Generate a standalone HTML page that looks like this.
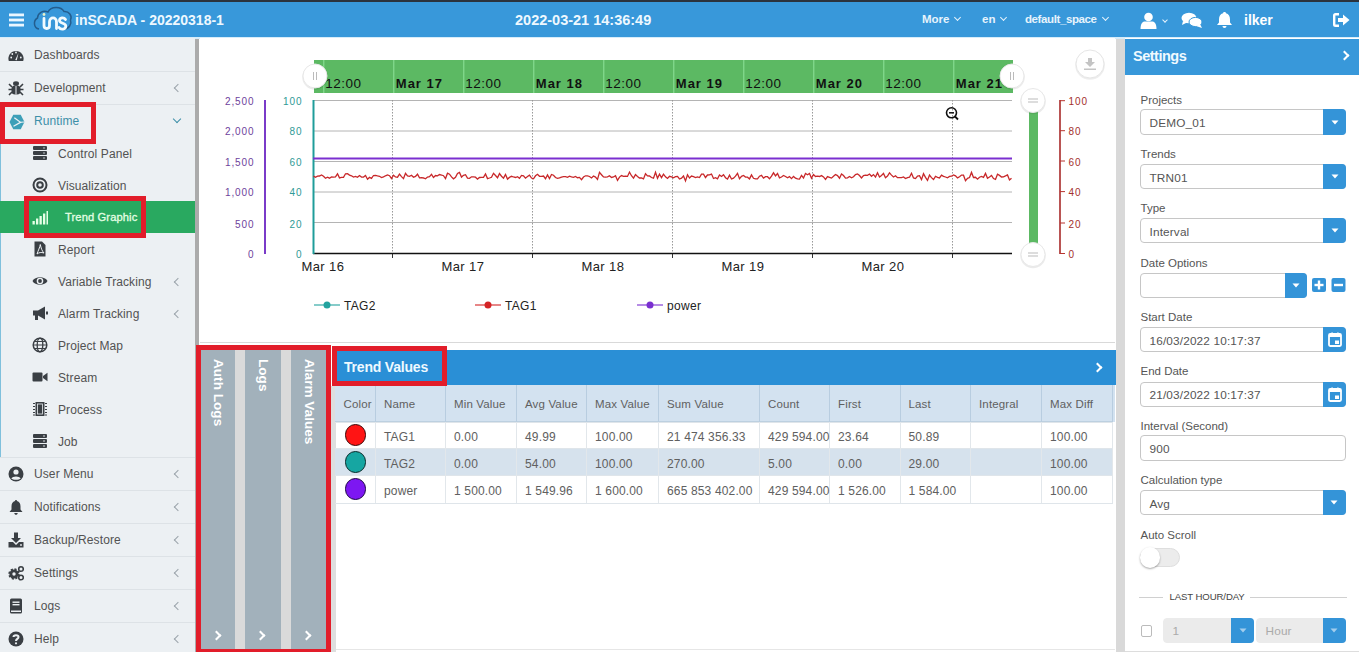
<!DOCTYPE html>
<html><head><meta charset="utf-8">
<style>
*{box-sizing:border-box;margin:0;padding:0}
html,body{width:1359px;height:652px;overflow:hidden;background:#fff;font-family:"Liberation Sans",sans-serif;position:relative}
.abs{position:absolute}
#topstrip{left:0;top:0;width:1359px;height:2px;background:#2b333d}
#header{left:0;top:2px;width:1359px;height:35px;background:#3898da;color:#fff}
#hline{left:0;top:37px;width:1359px;height:1.5px;background:#d6ecfa}
#sidebar{left:0;top:38px;width:195px;height:614px;background:#ecf0f3}
#sbbar{left:195px;top:39px;width:4px;height:613px;background:#ababab}
#main{left:200px;top:38px;width:915px;height:614px;background:#fff}
#vbar{left:1115.5px;top:39px;width:9.5px;height:613px;background:#d9d9d9}
#settings{left:1125px;top:38px;width:234px;height:614px;background:#fff}
.mi{position:absolute;left:0;width:195px;height:34px;border-bottom:1px solid #dde2e6;font-size:12px;color:#525252}
.mi span{position:absolute;left:34px;top:10px;letter-spacing:0.1px}
.si{position:absolute;left:0;width:195px;height:32px;font-size:12px;color:#525252}
.si span{position:absolute;left:58px;top:10px;letter-spacing:0.1px}
.chev{position:absolute;left:175px;top:14px;width:6px;height:6px;border-left:1.5px solid #9aa3aa;border-bottom:1.5px solid #9aa3aa;transform:rotate(45deg)}
.ico{position:absolute;left:8px;top:9px;width:16px;height:16px}
.sico{position:absolute;left:32px;top:8px;width:16px;height:16px}
.hchev{position:absolute;width:5px;height:5px;border-right:1.8px solid #e6f3fc;border-bottom:1.8px solid #e6f3fc;transform:rotate(45deg)}
.tab{top:350px;height:299px;background:#a2b1bb}
.vt{position:absolute;left:50%;top:9px;transform-origin:0 0;transform:rotate(90deg) translateY(-50%);white-space:nowrap;font-size:13.6px;font-weight:bold;color:#fff}
.tchev{position:absolute;left:12px;top:282px;width:7px;height:7px;border-right:2px solid #fff;border-top:2px solid #fff;transform:rotate(45deg)}
.tcell{font-size:12px;color:#606060;white-space:nowrap;letter-spacing:0.15px}
.slab{font-size:11.5px;color:#555;white-space:nowrap;letter-spacing:0px;margin-top:0.8px}
.sval{font-size:11.8px;color:#555;white-space:nowrap;letter-spacing:0.15px;margin-top:0.5px}
.redbox{position:absolute;border:5px solid #e21d2a}
</style></head><body>
<div id="topstrip" class="abs"></div>
<div id="header" class="abs">
 <svg class="abs" style="left:8px;top:11px" width="17" height="14" viewBox="0 0 17 14"><rect x="1" y="0.5" width="15" height="2.8" fill="#eaf6ff"/><rect x="1" y="5.6" width="15" height="2.8" fill="#eaf6ff"/><rect x="1" y="10.7" width="15" height="2.8" fill="#eaf6ff"/></svg>
 <svg class="abs" style="left:30px;top:0px" width="45" height="34" viewBox="0 0 45 34">
  <path d="M9 27 C3.5 26 3 18.5 7.5 16 C8 10.5 13.5 8 18 10 C21 4 31 4 34 9.5 C39 9 42.5 14 40.5 18 C42 22 39 27 34 27" fill="none" stroke="#235d8e" stroke-width="1.5"/>
  <g fill="none" stroke="#f2fbff" stroke-width="2.8" stroke-linecap="round">
   <path d="M14 16.5 L14 23.5 C14 27.5 19.5 27.5 19.5 23.5 L19.5 20 C19.5 14.5 26.5 14.5 26.5 20 L26.5 26.5"/>
   <path d="M35.5 17.5 C34 15 29.5 15.3 29.5 18.5 C29.5 21.8 35.8 20.8 35.8 24 C35.8 27.8 30.5 27.8 29 25.5"/>
  </g>
  <circle cx="14" cy="12.5" r="1.4" fill="#e8f0c8"/>
 </svg>
 <div class="abs" style="left:75px;top:10px;font-size:14px;font-weight:bold;color:#eef8ff;white-space:nowrap">inSCADA - 20220318-1</div>
 <div class="abs" style="left:515px;top:10px;font-size:14.5px;font-weight:bold;color:#eef8ff;white-space:nowrap">2022-03-21 14:36:49</div>
 <div class="abs" style="left:922px;top:11px;font-size:11.5px;font-weight:bold;color:#e6f3fc;white-space:nowrap">More</div>
 <div class="abs hchev" style="left:955px;top:13px"></div>
 <div class="abs" style="left:982px;top:11px;font-size:11.5px;font-weight:bold;color:#e6f3fc;white-space:nowrap">en</div>
 <div class="abs hchev" style="left:1001px;top:13px"></div>
 <div class="abs" style="left:1025px;top:11px;font-size:11.5px;font-weight:bold;color:#e6f3fc;white-space:nowrap;letter-spacing:-0.4px">default_space</div>
 <div class="abs hchev" style="left:1103px;top:13px"></div>
 <svg class="abs" style="left:1140px;top:10px" width="17" height="18" viewBox="0 0 17 18"><circle cx="8.5" cy="5" r="4.3" fill="#fff"/><path d="M0.5 17 C0.5 11 3 9.5 5 9.5 L12 9.5 C14 9.5 16.5 11 16.5 17 Z" fill="#fff"/></svg>
 <div class="abs hchev" style="left:1163px;top:16px;width:4px;height:4px"></div>
 <svg class="abs" style="left:1181px;top:10px" width="22" height="17" viewBox="0 0 22 17"><ellipse cx="8" cy="6" rx="7.5" ry="5.3" fill="#fff"/><path d="M2 9 L1 13 L6 10.5Z" fill="#fff"/><ellipse cx="14.5" cy="10" rx="6.5" ry="4.6" fill="#fff" stroke="#3898da" stroke-width="1"/><path d="M19 12 L21 16 L15 14Z" fill="#fff"/></svg>
 <svg class="abs" style="left:1216px;top:9px" width="17" height="18" viewBox="0 0 17 18"><path d="M8.5 1 C9.5 1 10 1.6 10 2.3 C12.8 3 14 5.5 14 8.5 L14 11.5 L16 14 L1 14 L3 11.5 L3 8.5 C3 5.5 4.2 3 7 2.3 C7 1.6 7.5 1 8.5 1Z" fill="#fff"/><path d="M6.5 15 L10.5 15 C10.5 16.3 9.6 17 8.5 17 C7.4 17 6.5 16.3 6.5 15Z" fill="#fff"/></svg>
 <div class="abs" style="left:1244px;top:10px;font-size:14px;font-weight:bold;color:#fff;white-space:nowrap">ilker</div>
 <svg class="abs" style="left:1333px;top:11px" width="17" height="14" viewBox="0 0 17 14"><path d="M6 1.2 L2.5 1.2 C1.6 1.2 1.2 1.7 1.2 2.5 L1.2 11.5 C1.2 12.3 1.6 12.8 2.5 12.8 L6 12.8" fill="none" stroke="#fff" stroke-width="2.4"/><path d="M5 5 L10 5 L10 1.5 L16.5 7 L10 12.5 L10 9 L5 9 Z" fill="#fff"/></svg>
</div>
<div id="hline" class="abs"></div>
<div id="sidebar" class="abs">
 <div class="mi" style="top:0px"><svg class="ico" style="top:9px" viewBox="0 0 16 16"><path d="M0.8 14 A7.6 7.6 0 1 1 15.2 14 Z" fill="#3a3f44"/><circle cx="3.2" cy="10.5" r="0.9" fill="#ecf0f3"/><circle cx="4.3" cy="7" r="0.9" fill="#ecf0f3"/><circle cx="12.8" cy="10.5" r="0.9" fill="#ecf0f3"/><circle cx="8" cy="5.5" r="0.9" fill="#ecf0f3"/><path d="M7.2 13 L10.5 6 L8.8 13.2Z" fill="#ecf0f3"/></svg><span>Dashboards</span></div>
 <div class="mi" style="top:33px"><svg class="ico" style="top:9px" viewBox="0 0 16 16"><ellipse cx="8" cy="3.5" rx="3" ry="2.3" fill="#3a3f44"/><rect x="3.5" y="5.5" width="9" height="9" rx="3.5" fill="#3a3f44"/><path d="M1 4 L4 7 M15 4 L12 7 M0.5 9.5 L4 9.5 M15.5 9.5 L12 9.5 M1 15 L4 12 M15 15 L12 12" stroke="#3a3f44" stroke-width="1.6"/><rect x="7.5" y="6" width="1" height="8.5" fill="#ecf0f3"/></svg><span>Development</span><div class="chev"></div></div>
 <div class="mi" style="top:66px;border-bottom:none"><svg class="ico" style="top:10px;left:9px" width="15" height="15" viewBox="0 0 15 15"><path d="M4 0.8 L11 0.8 L14.5 7.5 L11 14.2 L4 14.2 L0.5 7.5Z" fill="#3d9fb8"/><path d="M5 3.5 L10.8 7.8 L4.2 11.5" fill="none" stroke="#ecf0f3" stroke-width="1.2"/><path d="M10.8 7.8 L14.5 7.5" stroke="#ecf0f3" stroke-width="1"/></svg><span style="color:#3d8fa8">Runtime</span><div class="chev" style="left:174px;top:12px;border-color:#3d8fa8;transform:rotate(-45deg)"></div></div>
 <div class="abs" style="left:0;top:99px;width:1px;height:320px;background:#7fc0dc"></div>
 <div class="si" style="top:99px"><svg class="sico" viewBox="0 0 16 16"><rect x="1" y="1" width="14" height="4" rx="1" fill="#3a3f44"/><rect x="1" y="6" width="14" height="4" rx="1" fill="#3a3f44"/><rect x="1" y="11" width="14" height="4" rx="1" fill="#3a3f44"/><circle cx="12" cy="3" r="0.7" fill="#ecf0f3"/><circle cx="12" cy="8" r="0.7" fill="#ecf0f3"/><circle cx="12" cy="13" r="0.7" fill="#ecf0f3"/></svg><span>Control Panel</span></div>
 <div class="si" style="top:131px"><svg class="sico" viewBox="0 0 16 16"><circle cx="8" cy="8" r="6.5" fill="none" stroke="#3a3f44" stroke-width="2"/><circle cx="8" cy="8" r="2.8" fill="none" stroke="#3a3f44" stroke-width="2"/></svg><span>Visualization</span></div>
 <div class="si" style="top:163px;height:32px;background:#29a960;color:#e4ffe4"><svg class="sico" viewBox="0 0 16 16"><rect x="0.5" y="12" width="2.3" height="3.5" fill="#e6ffe6"/><rect x="4" y="9.5" width="2.3" height="6" fill="#e6ffe6"/><rect x="7.5" y="7" width="2.3" height="8.5" fill="#e6ffe6"/><rect x="11" y="4.5" width="2.3" height="11" fill="#e6ffe6"/><rect x="14.5" y="2" width="1.5" height="13.5" fill="#e6ffe6"/></svg><span style="left:65px;font-size:11.2px;color:#e4ffe4;-webkit-text-stroke:0.3px #e4ffe4">Trend Graphic</span></div>
 <div class="si" style="top:195px"><svg class="sico" viewBox="0 0 16 16"><path d="M2.5 0.5 L10 0.5 L13.5 4 L13.5 15.5 L2.5 15.5Z" fill="#3a3f44"/><path d="M5 13 C6 10 8 6 8.3 3.5 C9 7 10 10 12 12 C9 11 7 11.5 5 13Z" fill="none" stroke="#ecf0f3" stroke-width="1"/></svg><span>Report</span></div>
 <div class="si" style="top:227px"><svg class="sico" viewBox="0 0 16 16"><path d="M0.5 8 C3 3 13 3 15.5 8 C13 13 3 13 0.5 8Z" fill="#3a3f44"/><circle cx="8" cy="8" r="3.3" fill="#ecf0f3"/><circle cx="8" cy="8" r="1.9" fill="#3a3f44"/></svg><span>Variable Tracking</span><div class="chev"></div></div>
 <div class="si" style="top:259px"><svg class="sico" viewBox="0 0 16 16"><path d="M1 5.5 L6 5.5 L13 1.5 L13 14.5 L6 10.5 L1 10.5Z" fill="#3a3f44"/><rect x="3" y="10" width="3" height="5" fill="#3a3f44"/><rect x="14" y="6.5" width="2" height="3" fill="#3a3f44"/></svg><span>Alarm Tracking</span><div class="chev"></div></div>
 <div class="si" style="top:291px"><svg class="sico" viewBox="0 0 16 16"><circle cx="8" cy="8" r="6.8" fill="none" stroke="#3a3f44" stroke-width="1.5"/><ellipse cx="8" cy="8" rx="2.8" ry="6.8" fill="none" stroke="#3a3f44" stroke-width="1.3"/><path d="M1.2 8 L14.8 8 M2.5 4.5 L13.5 4.5 M2.5 11.5 L13.5 11.5" stroke="#3a3f44" stroke-width="1.2"/></svg><span>Project Map</span></div>
 <div class="si" style="top:323px"><svg class="sico" viewBox="0 0 16 16"><rect x="0.5" y="3.5" width="10" height="9" rx="1" fill="#3a3f44"/><path d="M11 7 L15.5 3.8 L15.5 12.2 L11 9Z" fill="#3a3f44"/></svg><span>Stream</span></div>
 <div class="si" style="top:355px"><svg class="sico" viewBox="0 0 16 16"><rect x="3.5" y="1" width="9" height="14" fill="#3a3f44"/><path d="M1 2.5 L3 2.5 M1 5.5 L3 5.5 M1 8.5 L3 8.5 M1 11.5 L3 11.5 M1 14 L3 14 M13 2.5 L15 2.5 M13 5.5 L15 5.5 M13 8.5 L15 8.5 M13 11.5 L15 11.5 M13 14 L15 14" stroke="#3a3f44" stroke-width="1.2"/><rect x="5.5" y="3" width="5" height="10" fill="none" stroke="#ecf0f3" stroke-width="0.8"/></svg><span>Process</span></div>
 <div class="si" style="top:387px"><svg class="sico" viewBox="0 0 16 16"><rect x="1" y="1" width="14" height="4" rx="1" fill="#3a3f44"/><rect x="1" y="6" width="14" height="4" rx="1" fill="#3a3f44"/><rect x="1" y="11" width="14" height="4" rx="1" fill="#3a3f44"/><circle cx="12" cy="3" r="0.8" fill="#ecf0f3"/><circle cx="12" cy="8" r="0.8" fill="#ecf0f3"/><circle cx="12" cy="13" r="0.8" fill="#ecf0f3"/></svg><span>Job</span></div>
 <div class="abs" style="left:0;top:419px;width:195px;height:1px;background:#dde2e6"></div>
 <div class="mi" style="top:419px"><svg class="ico" style="top:9px" viewBox="0 0 16 16"><circle cx="8" cy="8" r="7.5" fill="#3a3f44"/><circle cx="8" cy="6" r="2.6" fill="#ecf0f3"/><path d="M3.3 12.5 C4.5 9.8 11.5 9.8 12.7 12.5 C11 14.2 5 14.2 3.3 12.5Z" fill="#ecf0f3"/></svg><span>User Menu</span><div class="chev"></div></div>
 <div class="mi" style="top:452px"><svg class="ico" style="top:9px" viewBox="0 0 16 16"><path d="M8 1 C8.7 1 9 1.5 9 2 C11.5 2.6 12.5 4.8 12.5 7.5 L12.5 10.5 L14.5 13 L1.5 13 L3.5 10.5 L3.5 7.5 C3.5 4.8 4.5 2.6 7 2 C7 1.5 7.3 1 8 1Z" fill="#3a3f44"/><path d="M6.3 14 L9.7 14 C9.7 15.2 8.9 15.8 8 15.8 C7.1 15.8 6.3 15.2 6.3 14Z" fill="#3a3f44"/></svg><span>Notifications</span><div class="chev"></div></div>
 <div class="mi" style="top:485px"><svg class="ico" style="top:9px" viewBox="0 0 16 16"><path d="M6 0.5 L10 0.5 L10 6 L13 6 L8 11 L3 6 L6 6Z" fill="#3a3f44"/><path d="M0.5 10 L5 10 L8 13 L11 10 L15.5 10 L15.5 15.5 L0.5 15.5Z" fill="#3a3f44"/><circle cx="13" cy="13" r="0.9" fill="#ecf0f3"/></svg><span>Backup/Restore</span><div class="chev"></div></div>
 <div class="mi" style="top:518px"><svg class="ico" style="top:9px" viewBox="0 0 16 16"><circle cx="6" cy="9" r="4.6" fill="#3a3f44" stroke="#3a3f44" stroke-width="2.2" stroke-dasharray="2 1.6"/><circle cx="6" cy="9" r="1.7" fill="#ecf0f3"/><circle cx="13" cy="4" r="2.3" fill="none" stroke="#3a3f44" stroke-width="1.6"/><circle cx="13" cy="12.5" r="2.3" fill="none" stroke="#3a3f44" stroke-width="1.6"/></svg><span>Settings</span><div class="chev"></div></div>
 <div class="mi" style="top:551px"><svg class="ico" style="top:9px" viewBox="0 0 16 16"><rect x="2" y="0.5" width="12" height="15" rx="1.5" fill="#3a3f44"/><rect x="4.5" y="3.5" width="7" height="1.4" fill="#ecf0f3"/><rect x="4.5" y="6" width="7" height="1.4" fill="#ecf0f3"/><rect x="3" y="12.5" width="10" height="1.5" fill="#ecf0f3"/></svg><span>Logs</span><div class="chev"></div></div>
 <div class="mi" style="top:584px"><svg class="ico" style="top:9px" viewBox="0 0 16 16"><circle cx="8" cy="8" r="7.5" fill="#3a3f44"/><path d="M5.5 6 C5.5 3.5 10.5 3.5 10.5 6 C10.5 8 8 7.8 8 10" stroke="#ecf0f3" stroke-width="2" fill="none"/><circle cx="8" cy="12.3" r="1.1" fill="#ecf0f3"/></svg><span>Help</span><div class="chev"></div></div>
 <div class="redbox" style="left:0;top:64px;width:96px;height:42px"></div>
 <div class="redbox" style="left:24px;top:158px;width:122px;height:42px"></div>
</div>
<div id="sbbar" class="abs"></div>
<div id="main" class="abs"></div>
<svg class="abs" style="left:0;top:0" width="1359" height="652" viewBox="0 0 1359 652">
<rect x="314" y="60" width="699" height="33" fill="#5cb963"/>
<rect x="323.3" y="60" width="1" height="33" fill="#8fe39a"/>
<rect x="393.3" y="60" width="1" height="33" fill="#8fe39a"/>
<rect x="463.3" y="60" width="1" height="33" fill="#8fe39a"/>
<rect x="533.3" y="60" width="1" height="33" fill="#8fe39a"/>
<rect x="603.3" y="60" width="1" height="33" fill="#8fe39a"/>
<rect x="673.3" y="60" width="1" height="33" fill="#8fe39a"/>
<rect x="743.3" y="60" width="1" height="33" fill="#8fe39a"/>
<rect x="813.3" y="60" width="1" height="33" fill="#8fe39a"/>
<rect x="883.3" y="60" width="1" height="33" fill="#8fe39a"/>
<rect x="953.3" y="60" width="1" height="33" fill="#8fe39a"/>
<text x="325.3" y="88" font-family="Liberation Sans" font-size="13.5" fill="#111" letter-spacing="0.5">12:00</text>
<text x="395.8" y="88" font-family="Liberation Sans" font-size="13" font-weight="bold" fill="#111" letter-spacing="1">Mar 17</text>
<text x="465.3" y="88" font-family="Liberation Sans" font-size="13.5" fill="#111" letter-spacing="0.5">12:00</text>
<text x="535.8" y="88" font-family="Liberation Sans" font-size="13" font-weight="bold" fill="#111" letter-spacing="1">Mar 18</text>
<text x="605.3" y="88" font-family="Liberation Sans" font-size="13.5" fill="#111" letter-spacing="0.5">12:00</text>
<text x="675.8" y="88" font-family="Liberation Sans" font-size="13" font-weight="bold" fill="#111" letter-spacing="1">Mar 19</text>
<text x="745.3" y="88" font-family="Liberation Sans" font-size="13.5" fill="#111" letter-spacing="0.5">12:00</text>
<text x="815.8" y="88" font-family="Liberation Sans" font-size="13" font-weight="bold" fill="#111" letter-spacing="1">Mar 20</text>
<text x="885.3" y="88" font-family="Liberation Sans" font-size="13.5" fill="#111" letter-spacing="0.5">12:00</text>
<text x="955.8" y="88" font-family="Liberation Sans" font-size="13" font-weight="bold" fill="#111" letter-spacing="1">Mar 21</text>
<line x1="313" y1="100.5" x2="1012" y2="100.5" stroke="#b4b4b4" stroke-width="1"/>
<line x1="313" y1="131" x2="1012" y2="131" stroke="#b4b4b4" stroke-width="1"/>
<line x1="313" y1="161.5" x2="1012" y2="161.5" stroke="#b4b4b4" stroke-width="1"/>
<line x1="313" y1="192" x2="1012" y2="192" stroke="#b4b4b4" stroke-width="1"/>
<line x1="313" y1="222.5" x2="1012" y2="222.5" stroke="#b4b4b4" stroke-width="1"/>
<line x1="392.5" y1="100" x2="392.5" y2="253" stroke="#999" stroke-width="1" stroke-dasharray="1.5 1.5"/>
<line x1="392.5" y1="253" x2="392.5" y2="258" stroke="#333" stroke-width="1"/>
<line x1="532.5" y1="100" x2="532.5" y2="253" stroke="#999" stroke-width="1" stroke-dasharray="1.5 1.5"/>
<line x1="532.5" y1="253" x2="532.5" y2="258" stroke="#333" stroke-width="1"/>
<line x1="672.5" y1="100" x2="672.5" y2="253" stroke="#999" stroke-width="1" stroke-dasharray="1.5 1.5"/>
<line x1="672.5" y1="253" x2="672.5" y2="258" stroke="#333" stroke-width="1"/>
<line x1="812.5" y1="100" x2="812.5" y2="253" stroke="#999" stroke-width="1" stroke-dasharray="1.5 1.5"/>
<line x1="812.5" y1="253" x2="812.5" y2="258" stroke="#333" stroke-width="1"/>
<line x1="952.5" y1="100" x2="952.5" y2="253" stroke="#999" stroke-width="1" stroke-dasharray="1.5 1.5"/>
<line x1="952.5" y1="253" x2="952.5" y2="258" stroke="#333" stroke-width="1"/>
<line x1="313" y1="253.5" x2="1012" y2="253.5" stroke="#111" stroke-width="1.6"/>
<line x1="313.5" y1="100" x2="313.5" y2="254" stroke="#1f9d9a" stroke-width="2"/>
<line x1="265" y1="100" x2="265" y2="254" stroke="#7a3bc8" stroke-width="2"/>
<line x1="1060" y1="100" x2="1060" y2="254" stroke="#a82a28" stroke-width="1.6"/>
<text x="254.5" y="105.3" text-anchor="end" font-family="Liberation Sans" font-size="10" fill="#6e3f9c" letter-spacing="0.9">2,500</text>
<text x="254.5" y="135.3" text-anchor="end" font-family="Liberation Sans" font-size="10" fill="#6e3f9c" letter-spacing="0.9">2,000</text>
<text x="254.5" y="165.6" text-anchor="end" font-family="Liberation Sans" font-size="10" fill="#6e3f9c" letter-spacing="0.9">1,500</text>
<text x="254.5" y="196.2" text-anchor="end" font-family="Liberation Sans" font-size="10" fill="#6e3f9c" letter-spacing="0.9">1,000</text>
<text x="254.5" y="227.6" text-anchor="end" font-family="Liberation Sans" font-size="10" fill="#6e3f9c" letter-spacing="0.9">500</text>
<text x="254.5" y="258.1" text-anchor="end" font-family="Liberation Sans" font-size="10" fill="#6e3f9c" letter-spacing="0.9">0</text>
<text x="302.5" y="105.3" text-anchor="end" font-family="Liberation Sans" font-size="10" fill="#2f9a96" letter-spacing="0.9">100</text>
<text x="302.5" y="135.3" text-anchor="end" font-family="Liberation Sans" font-size="10" fill="#2f9a96" letter-spacing="0.9">80</text>
<text x="302.5" y="165.6" text-anchor="end" font-family="Liberation Sans" font-size="10" fill="#2f9a96" letter-spacing="0.9">60</text>
<text x="302.5" y="196.2" text-anchor="end" font-family="Liberation Sans" font-size="10" fill="#2f9a96" letter-spacing="0.9">40</text>
<text x="302.5" y="227.6" text-anchor="end" font-family="Liberation Sans" font-size="10" fill="#2f9a96" letter-spacing="0.9">20</text>
<text x="302.5" y="258.1" text-anchor="end" font-family="Liberation Sans" font-size="10" fill="#2f9a96" letter-spacing="0.9">0</text>
<line x1="1060" y1="100.7" x2="1065" y2="100.7" stroke="#b8352f" stroke-width="1"/>
<text x="1068.5" y="105.3" font-family="Liberation Sans" font-size="10" fill="#a3302c" letter-spacing="0.9">100</text>
<line x1="1060" y1="130.7" x2="1065" y2="130.7" stroke="#b8352f" stroke-width="1"/>
<text x="1068.5" y="135.3" font-family="Liberation Sans" font-size="10" fill="#a3302c" letter-spacing="0.9">80</text>
<line x1="1060" y1="161.0" x2="1065" y2="161.0" stroke="#b8352f" stroke-width="1"/>
<text x="1068.5" y="165.6" font-family="Liberation Sans" font-size="10" fill="#a3302c" letter-spacing="0.9">60</text>
<line x1="1060" y1="191.6" x2="1065" y2="191.6" stroke="#b8352f" stroke-width="1"/>
<text x="1068.5" y="196.2" font-family="Liberation Sans" font-size="10" fill="#a3302c" letter-spacing="0.9">40</text>
<line x1="1060" y1="223.0" x2="1065" y2="223.0" stroke="#b8352f" stroke-width="1"/>
<text x="1068.5" y="227.6" font-family="Liberation Sans" font-size="10" fill="#a3302c" letter-spacing="0.9">20</text>
<line x1="1060" y1="253.5" x2="1065" y2="253.5" stroke="#b8352f" stroke-width="1"/>
<text x="1068.5" y="258.1" font-family="Liberation Sans" font-size="10" fill="#a3302c" letter-spacing="0.9">0</text>
<line x1="313" y1="158.5" x2="1012" y2="158.5" stroke="#7b2fd0" stroke-width="2"/>
<polyline points="313.5,176.1 315.5,177.3 317.5,176.1 319.5,176.0 321.5,175.0 323.5,176.2 325.5,178.3 327.5,177.2 329.5,178.2 331.5,176.9 333.5,177.1 335.5,176.8 337.5,173.8 339.5,177.9 341.5,177.3 343.5,177.3 345.5,173.8 347.5,173.7 349.5,175.1 351.5,175.8 353.5,177.0 355.5,176.4 357.5,177.3 359.5,175.5 361.5,177.0 363.5,177.1 365.5,175.4 367.5,179.2 369.5,177.4 371.5,178.4 373.5,175.5 375.5,175.3 377.5,175.9 379.5,176.3 381.5,177.5 383.5,176.9 385.5,175.8 387.5,175.0 389.5,175.7 391.5,178.5 393.5,175.2 395.5,176.9 397.5,177.2 399.5,174.1 401.5,176.6 403.5,178.6 405.5,173.3 407.5,176.0 409.5,176.3 411.5,175.2 413.5,177.3 415.5,176.4 417.5,174.2 419.5,177.8 421.5,177.6 423.5,178.0 425.5,178.8 427.5,177.1 429.5,176.7 431.5,174.4 433.5,177.5 435.5,175.5 437.5,175.8 439.5,174.5 441.5,175.0 443.5,175.7 445.5,178.6 447.5,173.2 449.5,174.2 451.5,176.9 453.5,178.8 455.5,177.4 457.5,173.5 459.5,172.5 461.5,177.1 463.5,175.3 465.5,174.7 467.5,178.1 469.5,178.3 471.5,176.8 473.5,176.9 475.5,177.2 477.5,179.1 479.5,177.5 481.5,177.3 483.5,177.4 485.5,174.0 487.5,178.6 489.5,178.0 491.5,177.3 493.5,173.3 495.5,175.5 497.5,177.8 499.5,173.6 501.5,176.2 503.5,178.1 505.5,174.4 507.5,179.1 509.5,177.4 511.5,176.3 513.5,177.0 515.5,177.5 517.5,176.7 519.5,178.3 521.5,175.4 523.5,175.8 525.5,178.2 527.5,176.5 529.5,175.1 531.5,178.0 533.5,178.8 535.5,175.8 537.5,174.3 539.5,176.3 541.5,176.3 543.5,176.0 545.5,178.7 547.5,174.9 549.5,178.5 551.5,174.5 553.5,175.2 555.5,177.5 557.5,178.3 559.5,177.9 561.5,177.1 563.5,176.7 565.5,176.7 567.5,177.4 569.5,176.2 571.5,176.9 573.5,177.4 575.5,176.5 577.5,177.7 579.5,177.4 581.5,179.7 583.5,177.0 585.5,175.8 587.5,175.9 589.5,176.5 591.5,178.0 593.5,176.0 595.5,177.1 597.5,179.4 599.5,172.4 601.5,174.7 603.5,176.9 605.5,177.1 607.5,176.9 609.5,175.8 611.5,177.5 613.5,177.0 615.5,175.7 617.5,180.4 619.5,177.1 621.5,175.6 623.5,176.3 625.5,176.1 627.5,176.4 629.5,172.1 631.5,175.7 633.5,178.1 635.5,174.6 637.5,176.4 639.5,178.0 641.5,177.9 643.5,178.9 645.5,173.8 647.5,175.9 649.5,176.0 651.5,177.5 653.5,178.2 655.5,172.2 657.5,178.2 659.5,174.2 661.5,177.6 663.5,174.1 665.5,176.8 667.5,178.4 669.5,176.3 671.5,176.8 673.5,177.8 675.5,176.7 677.5,176.4 679.5,179.0 681.5,178.2 683.5,176.0 685.5,180.9 687.5,174.7 689.5,178.0 691.5,176.1 693.5,176.7 695.5,177.6 697.5,176.9 699.5,177.5 701.5,174.1 703.5,174.1 705.5,177.5 707.5,175.0 709.5,174.9 711.5,174.1 713.5,178.5 715.5,177.7 717.5,178.9 719.5,175.0 721.5,176.5 723.5,174.7 725.5,177.7 727.5,179.0 729.5,175.1 731.5,179.0 733.5,178.1 735.5,176.2 737.5,173.3 739.5,178.8 741.5,176.3 743.5,175.5 745.5,177.1 747.5,177.2 749.5,178.9 751.5,174.9 753.5,178.3 755.5,178.9 757.5,178.8 759.5,176.2 761.5,175.3 763.5,178.1 765.5,176.7 767.5,176.7 769.5,178.8 771.5,176.1 773.5,172.8 775.5,175.9 777.5,173.5 779.5,177.8 781.5,177.0 783.5,175.5 785.5,176.5 787.5,177.8 789.5,176.6 791.5,178.6 793.5,176.4 795.5,178.2 797.5,178.9 799.5,179.1 801.5,175.4 803.5,177.9 805.5,173.5 807.5,174.8 809.5,173.4 811.5,178.2 813.5,174.5 815.5,176.5 817.5,176.2 819.5,176.5 821.5,175.6 823.5,176.9 825.5,179.4 827.5,176.6 829.5,177.3 831.5,178.1 833.5,176.2 835.5,174.5 837.5,175.6 839.5,178.2 841.5,173.9 843.5,175.5 845.5,178.1 847.5,177.8 849.5,176.5 851.5,177.8 853.5,176.8 855.5,174.6 857.5,174.0 859.5,175.5 861.5,178.0 863.5,175.6 865.5,175.1 867.5,175.3 869.5,174.0 871.5,176.3 873.5,174.6 875.5,177.1 877.5,172.7 879.5,177.0 881.5,175.5 883.5,173.4 885.5,177.7 887.5,176.1 889.5,172.9 891.5,175.1 893.5,177.0 895.5,175.8 897.5,177.7 899.5,177.7 901.5,177.6 903.5,177.0 905.5,178.6 907.5,177.6 909.5,177.2 911.5,173.2 913.5,177.9 915.5,178.6 917.5,176.0 919.5,175.7 921.5,179.6 923.5,173.7 925.5,177.3 927.5,180.4 929.5,175.0 931.5,177.6 933.5,179.5 935.5,176.3 937.5,177.4 939.5,177.9 941.5,175.1 943.5,176.4 945.5,177.0 947.5,177.8 949.5,176.4 951.5,176.2 953.5,174.9 955.5,175.9 957.5,177.9 959.5,176.7 961.5,175.1 963.5,175.2 965.5,180.8 967.5,178.3 969.5,177.5 971.5,172.4 973.5,177.5 975.5,177.3 977.5,179.2 979.5,177.2 981.5,176.4 983.5,177.3 985.5,173.4 987.5,178.2 989.5,177.0 991.5,175.4 993.5,178.6 995.5,179.4 997.5,174.3 999.5,175.4 1001.5,177.0 1003.5,176.8 1005.5,175.9 1007.5,174.9 1009.5,179.9 1011.5,178.2" fill="none" stroke="#c8282a" stroke-width="1.3"/>
<text x="301.5" y="270.7" font-family="Liberation Sans" font-size="13" fill="#222" letter-spacing="0.4">Mar 16</text>
<text x="441.5" y="270.7" font-family="Liberation Sans" font-size="13" fill="#222" letter-spacing="0.4">Mar 17</text>
<text x="581.5" y="270.7" font-family="Liberation Sans" font-size="13" fill="#222" letter-spacing="0.4">Mar 18</text>
<text x="721.5" y="270.7" font-family="Liberation Sans" font-size="13" fill="#222" letter-spacing="0.4">Mar 19</text>
<text x="861.5" y="270.7" font-family="Liberation Sans" font-size="13" fill="#222" letter-spacing="0.4">Mar 20</text>
<line x1="314" y1="305" x2="340" y2="305" stroke="#23a39f" stroke-width="1.1"/><circle cx="327" cy="305" r="3.5" fill="#23a39f"/>
<text x="344" y="309.5" font-family="Liberation Sans" font-size="12" fill="#222" letter-spacing="0.3">TAG2</text>
<line x1="475" y1="305" x2="501" y2="305" stroke="#d42426" stroke-width="1.1"/><circle cx="488" cy="305" r="3.5" fill="#d42426"/>
<text x="505" y="309.5" font-family="Liberation Sans" font-size="12" fill="#222" letter-spacing="0.3">TAG1</text>
<line x1="637" y1="305" x2="663" y2="305" stroke="#7a2fd0" stroke-width="1.1"/><circle cx="650" cy="305" r="3.5" fill="#7a2fd0"/>
<text x="667" y="309.5" font-family="Liberation Sans" font-size="12" fill="#222" letter-spacing="0.3">power</text>
<rect x="1029" y="100" width="9" height="155" fill="#5cb963"/>
<circle cx="315" cy="77" r="12.8" fill="#000" opacity="0.08"/><circle cx="315" cy="76" r="12" fill="#fff" stroke="#e8e8e8" stroke-width="1"/><line x1="313.5" y1="72" x2="313.5" y2="80" stroke="#bbb" stroke-width="1"/><line x1="316.5" y1="72" x2="316.5" y2="80" stroke="#bbb" stroke-width="1"/>
<circle cx="1012" cy="77" r="12.8" fill="#000" opacity="0.08"/><circle cx="1012" cy="76" r="12" fill="#fff" stroke="#e8e8e8" stroke-width="1"/><line x1="1010.5" y1="72" x2="1010.5" y2="80" stroke="#bbb" stroke-width="1"/><line x1="1013.5" y1="72" x2="1013.5" y2="80" stroke="#bbb" stroke-width="1"/>
<circle cx="1033" cy="101.5" r="12.8" fill="#000" opacity="0.08"/><circle cx="1033" cy="100.5" r="12" fill="#fff" stroke="#e8e8e8" stroke-width="1"/><line x1="1028" y1="99.0" x2="1038" y2="99.0" stroke="#bbb" stroke-width="1"/><line x1="1028" y1="102.0" x2="1038" y2="102.0" stroke="#bbb" stroke-width="1"/>
<circle cx="1033" cy="255.5" r="12.8" fill="#000" opacity="0.08"/><circle cx="1033" cy="254.5" r="12" fill="#fff" stroke="#e8e8e8" stroke-width="1"/><line x1="1028" y1="253.0" x2="1038" y2="253.0" stroke="#bbb" stroke-width="1"/><line x1="1028" y1="256.0" x2="1038" y2="256.0" stroke="#bbb" stroke-width="1"/>
<circle cx="1090" cy="65" r="14.8" fill="#000" opacity="0.07"/><circle cx="1090" cy="64" r="14" fill="#fff" stroke="#e6e6e6" stroke-width="1"/>
<path d="M1088 58 L1092 58 L1092 62 L1095 62 L1090 67 L1085 62 L1088 62Z" fill="#c4c4c4"/><rect x="1084" y="68.5" width="12" height="1.5" fill="#c4c4c4"/>
<circle cx="951.5" cy="112.8" r="5" fill="none" stroke="#111" stroke-width="1.6"/><line x1="949" y1="112.8" x2="954" y2="112.8" stroke="#111" stroke-width="1.5"/><line x1="955" y1="116.5" x2="958" y2="119.5" stroke="#111" stroke-width="1.8"/>
<rect x="200" y="342" width="915" height="1" fill="#d9d9d9"/>
</svg>

<div class="abs" style="left:196px;top:345px;width:135px;height:309px;background:#e21d2a"></div>
<div class="abs" style="left:201px;top:350px;width:125px;height:299px;background:#dadada"></div>
<div class="abs" style="left:331px;top:386px;width:5px;height:266px;background:#dedede"></div>
<div class="abs" style="left:336px;top:649px;width:779px;height:1px;background:#e6e6e6"></div>
<div class="abs tab" style="left:201px;width:34px"><div class="vt">Auth Logs</div><div class="tchev"></div></div>
<div class="abs tab" style="left:245px;width:36px"><div class="vt">Logs</div><div class="tchev"></div></div>
<div class="abs tab" style="left:291px;width:35px"><div class="vt">Alarm Values</div><div class="tchev"></div></div>
<div class="abs" style="left:332px;top:350px;width:784px;height:35px;background:#2a8fd6"></div>
<div class="abs" style="left:1094px;top:364px;width:7px;height:7px;border-right:2px solid #fff;border-top:2px solid #fff;transform:rotate(45deg)"></div>
<div class="abs" style="left:335px;top:385px;width:780px;height:37px;background:#d3e2f0"></div>
<div class="abs" style="left:335px;top:448px;width:778px;height:27px;background:#d6e2ed"></div>
<div class="abs" style="left:335px;top:421.5px;width:778px;height:1px;background:#dfe5ea"></div>
<div class="abs" style="left:335px;top:448px;width:778px;height:1px;background:#dfe5ea"></div>
<div class="abs" style="left:335px;top:475px;width:778px;height:1px;background:#dfe5ea"></div>
<div class="abs" style="left:335px;top:502.5px;width:778px;height:1px;background:#dfe5ea"></div>
<div class="abs" style="left:335px;top:421px;width:778px;height:1px;background:#bdd0e0"></div>
<div class="abs" style="left:375.0px;top:385px;width:1px;height:37px;background:#b8cde0"></div>
<div class="abs" style="left:375.0px;top:422px;width:1px;height:81px;background:#e2e7eb"></div>
<div class="abs" style="left:445.0px;top:385px;width:1px;height:37px;background:#b8cde0"></div>
<div class="abs" style="left:445.0px;top:422px;width:1px;height:81px;background:#e2e7eb"></div>
<div class="abs" style="left:516.0px;top:385px;width:1px;height:37px;background:#b8cde0"></div>
<div class="abs" style="left:516.0px;top:422px;width:1px;height:81px;background:#e2e7eb"></div>
<div class="abs" style="left:586.0px;top:385px;width:1px;height:37px;background:#b8cde0"></div>
<div class="abs" style="left:586.0px;top:422px;width:1px;height:81px;background:#e2e7eb"></div>
<div class="abs" style="left:658.0px;top:385px;width:1px;height:37px;background:#b8cde0"></div>
<div class="abs" style="left:658.0px;top:422px;width:1px;height:81px;background:#e2e7eb"></div>
<div class="abs" style="left:759.0px;top:385px;width:1px;height:37px;background:#b8cde0"></div>
<div class="abs" style="left:759.0px;top:422px;width:1px;height:81px;background:#e2e7eb"></div>
<div class="abs" style="left:829.0px;top:385px;width:1px;height:37px;background:#b8cde0"></div>
<div class="abs" style="left:829.0px;top:422px;width:1px;height:81px;background:#e2e7eb"></div>
<div class="abs" style="left:899.5px;top:385px;width:1px;height:37px;background:#b8cde0"></div>
<div class="abs" style="left:899.5px;top:422px;width:1px;height:81px;background:#e2e7eb"></div>
<div class="abs" style="left:970.0px;top:385px;width:1px;height:37px;background:#b8cde0"></div>
<div class="abs" style="left:970.0px;top:422px;width:1px;height:81px;background:#e2e7eb"></div>
<div class="abs" style="left:1041.0px;top:385px;width:1px;height:37px;background:#b8cde0"></div>
<div class="abs" style="left:1041.0px;top:422px;width:1px;height:81px;background:#e2e7eb"></div>
<div class="abs" style="left:1112.0px;top:385px;width:1px;height:37px;background:#b8cde0"></div>
<div class="abs" style="left:1112.0px;top:422px;width:1px;height:81px;background:#e2e7eb"></div>
<div class="abs tcell" style="left:343.5px;top:397.5px;font-size:11.5px">Color</div>
<div class="abs tcell" style="left:384.0px;top:397.5px;font-size:11.5px">Name</div>
<div class="abs tcell" style="left:454.0px;top:397.5px;font-size:11.5px">Min Value</div>
<div class="abs tcell" style="left:525.0px;top:397.5px;font-size:11.5px">Avg Value</div>
<div class="abs tcell" style="left:595.0px;top:397.5px;font-size:11.5px">Max Value</div>
<div class="abs tcell" style="left:667.0px;top:397.5px;font-size:11.5px">Sum Value</div>
<div class="abs tcell" style="left:768.0px;top:397.5px;font-size:11.5px">Count</div>
<div class="abs tcell" style="left:838.0px;top:397.5px;font-size:11.5px">First</div>
<div class="abs tcell" style="left:908.5px;top:397.5px;font-size:11.5px">Last</div>
<div class="abs tcell" style="left:979.0px;top:397.5px;font-size:11.5px">Integral</div>
<div class="abs tcell" style="left:1050.0px;top:397.5px;font-size:11.5px">Max Diff</div>
<div class="abs" style="left:344.5px;top:424px;width:21.5px;height:21.5px;border-radius:50%;background:#ff1414;border:1.5px solid #3a0505"></div>
<div class="abs tcell" style="left:384.0px;top:429.5px">TAG1</div>
<div class="abs tcell" style="left:454.0px;top:429.5px">0.00</div>
<div class="abs tcell" style="left:525.0px;top:429.5px">49.99</div>
<div class="abs tcell" style="left:595.0px;top:429.5px">100.00</div>
<div class="abs tcell" style="left:667.0px;top:429.5px">21 474 356.33</div>
<div class="abs tcell" style="left:768.0px;top:429.5px">429 594.00</div>
<div class="abs tcell" style="left:838.0px;top:429.5px">23.64</div>
<div class="abs tcell" style="left:908.5px;top:429.5px">50.89</div>
<div class="abs tcell" style="left:1050.0px;top:429.5px">100.00</div>
<div class="abs" style="left:344.5px;top:451px;width:21.5px;height:21.5px;border-radius:50%;background:#16a6a2;border:1.5px solid #062a29"></div>
<div class="abs tcell" style="left:384.0px;top:456.5px">TAG2</div>
<div class="abs tcell" style="left:454.0px;top:456.5px">0.00</div>
<div class="abs tcell" style="left:525.0px;top:456.5px">54.00</div>
<div class="abs tcell" style="left:595.0px;top:456.5px">100.00</div>
<div class="abs tcell" style="left:667.0px;top:456.5px">270.00</div>
<div class="abs tcell" style="left:768.0px;top:456.5px">5.00</div>
<div class="abs tcell" style="left:838.0px;top:456.5px">0.00</div>
<div class="abs tcell" style="left:908.5px;top:456.5px">29.00</div>
<div class="abs tcell" style="left:1050.0px;top:456.5px">100.00</div>
<div class="abs" style="left:344.5px;top:478px;width:21.5px;height:21.5px;border-radius:50%;background:#7d17f2;border:1.5px solid #1c0545"></div>
<div class="abs tcell" style="left:384.0px;top:483.5px">power</div>
<div class="abs tcell" style="left:454.0px;top:483.5px">1 500.00</div>
<div class="abs tcell" style="left:525.0px;top:483.5px">1 549.96</div>
<div class="abs tcell" style="left:595.0px;top:483.5px">1 600.00</div>
<div class="abs tcell" style="left:667.0px;top:483.5px">665 853 402.00</div>
<div class="abs tcell" style="left:768.0px;top:483.5px">429 594.00</div>
<div class="abs tcell" style="left:838.0px;top:483.5px">1 526.00</div>
<div class="abs tcell" style="left:908.5px;top:483.5px">1 584.00</div>
<div class="abs tcell" style="left:1050.0px;top:483.5px">100.00</div>
<div class="redbox" style="left:332px;top:346px;width:115px;height:40px"></div>
<div class="abs" style="left:344px;top:359px;font-size:14px;font-weight:bold;color:#eef9ff;white-space:nowrap;letter-spacing:-0.2px">Trend Values</div>
<div id="vbar" class="abs"></div>
<div id="settings" class="abs"></div>
<div class="abs" style="left:1125px;top:39px;width:234px;height:35.5px;background:#3898da"></div>
<div class="abs" style="left:1133px;top:48px;font-size:14.5px;font-weight:bold;color:#f0faff;white-space:nowrap;letter-spacing:-0.5px">Settings</div>
<div class="abs" style="left:1341px;top:52px;width:7px;height:7px;border-right:2px solid #fff;border-top:2px solid #fff;transform:rotate(45deg)"></div>
<div class="abs slab" style="left:1140.5px;top:93px">Projects</div>
<div class="abs" style="left:1140px;top:109px;width:206px;height:25.5px;border:1px solid #c6c6c6;border-radius:4px;background:#fff"></div><div class="abs sval" style="left:1149.5px;top:115.5px;color:#555">DEMO_01</div><div class="abs" style="left:1323px;top:109px;width:23px;height:25.5px;background:#3494d8;border-radius:0 4px 4px 0"></div><svg class="abs" style="left:1330.5px;top:119.5px;opacity:1" width="8" height="5" viewBox="0 0 8 5"><path d="M0.5 0.5 L7.5 0.5 L4 4.5Z" fill="#fff"/></svg>
<div class="abs slab" style="left:1140.5px;top:147px">Trends</div>
<div class="abs" style="left:1140px;top:164px;width:206px;height:25px;border:1px solid #c6c6c6;border-radius:4px;background:#fff"></div><div class="abs sval" style="left:1149.5px;top:170px;color:#555">TRN01</div><div class="abs" style="left:1323px;top:164px;width:23px;height:25px;background:#3494d8;border-radius:0 4px 4px 0"></div><svg class="abs" style="left:1330.5px;top:174px;opacity:1" width="8" height="5" viewBox="0 0 8 5"><path d="M0.5 0.5 L7.5 0.5 L4 4.5Z" fill="#fff"/></svg>
<div class="abs slab" style="left:1140.5px;top:201.5px">Type</div>
<div class="abs" style="left:1140px;top:218px;width:206px;height:25px;border:1px solid #c6c6c6;border-radius:4px;background:#fff"></div><div class="abs sval" style="left:1149.5px;top:224px;color:#555">Interval</div><div class="abs" style="left:1323px;top:218px;width:23px;height:25px;background:#3494d8;border-radius:0 4px 4px 0"></div><svg class="abs" style="left:1330.5px;top:228px;opacity:1" width="8" height="5" viewBox="0 0 8 5"><path d="M0.5 0.5 L7.5 0.5 L4 4.5Z" fill="#fff"/></svg>
<div class="abs slab" style="left:1140.5px;top:256px">Date Options</div>
<div class="abs" style="left:1140px;top:272.5px;width:167px;height:25px;border:1px solid #c6c6c6;border-radius:4px;background:#fff"></div><div class="abs" style="left:1285px;top:272.5px;width:22px;height:25px;background:#3494d8;border-radius:0 4px 4px 0"></div><svg class="abs" style="left:1292.0px;top:282.5px;opacity:1" width="8" height="5" viewBox="0 0 8 5"><path d="M0.5 0.5 L7.5 0.5 L4 4.5Z" fill="#fff"/></svg>
<svg class="abs" style="left:1311.5px;top:278px" width="34" height="14" viewBox="0 0 34 14"><rect x="0" y="0" width="14" height="14" rx="2" fill="#3494d8"/><rect x="2.5" y="5.8" width="9" height="2.4" fill="#fff"/><rect x="5.8" y="2.5" width="2.4" height="9" fill="#fff"/><rect x="19.5" y="0" width="14" height="14" rx="2" fill="#3494d8"/><rect x="22" y="5.8" width="9" height="2.4" fill="#fff"/></svg>
<div class="abs slab" style="left:1140.5px;top:310px">Start Date</div>
<div class="abs" style="left:1140px;top:327px;width:206px;height:25px;border:1px solid #c6c6c6;border-radius:4px;background:#fff"></div><div class="abs sval" style="left:1149.5px;top:333px;color:#555">16/03/2022 10:17:37</div><div class="abs" style="left:1323px;top:327px;width:23px;height:25px;background:#3494d8;border-radius:0 4px 4px 0"></div><svg class="abs" style="left:1327.5px;top:332px" width="14" height="15" viewBox="0 0 14 15"><rect x="1" y="2" width="12" height="12" rx="1.2" fill="none" stroke="#fff" stroke-width="1.8"/><rect x="1" y="2" width="12" height="3" fill="#fff"/><rect x="7" y="8.5" width="4" height="3.5" fill="#fff"/><rect x="3.3" y="0.5" width="1.6" height="2.5" fill="#fff"/><rect x="9.1" y="0.5" width="1.6" height="2.5" fill="#fff"/></svg>
<div class="abs slab" style="left:1140.5px;top:364.5px">End Date</div>
<div class="abs" style="left:1140px;top:381.5px;width:206px;height:25px;border:1px solid #c6c6c6;border-radius:4px;background:#fff"></div><div class="abs sval" style="left:1149.5px;top:387.5px;color:#555">21/03/2022 10:17:37</div><div class="abs" style="left:1323px;top:381.5px;width:23px;height:25px;background:#3494d8;border-radius:0 4px 4px 0"></div><svg class="abs" style="left:1327.5px;top:386.5px" width="14" height="15" viewBox="0 0 14 15"><rect x="1" y="2" width="12" height="12" rx="1.2" fill="none" stroke="#fff" stroke-width="1.8"/><rect x="1" y="2" width="12" height="3" fill="#fff"/><rect x="7" y="8.5" width="4" height="3.5" fill="#fff"/><rect x="3.3" y="0.5" width="1.6" height="2.5" fill="#fff"/><rect x="9.1" y="0.5" width="1.6" height="2.5" fill="#fff"/></svg>
<div class="abs slab" style="left:1140.5px;top:419px">Interval (Second)</div>
<div class="abs" style="left:1140px;top:435px;width:206px;height:25.5px;border:1px solid #c6c6c6;border-radius:4px;background:#fff"></div><div class="abs sval" style="left:1149.5px;top:441.5px">900</div>
<div class="abs slab" style="left:1140.5px;top:473.5px">Calculation type</div>
<div class="abs" style="left:1140px;top:490px;width:205.5px;height:25px;border:1px solid #c6c6c6;border-radius:4px;background:#fff"></div><div class="abs sval" style="left:1149.5px;top:496px;color:#555">Avg</div><div class="abs" style="left:1323.0px;top:490px;width:22.5px;height:25px;background:#3494d8;border-radius:0 4px 4px 0"></div><svg class="abs" style="left:1330.25px;top:500px;opacity:1" width="8" height="5" viewBox="0 0 8 5"><path d="M0.5 0.5 L7.5 0.5 L4 4.5Z" fill="#fff"/></svg>
<div class="abs slab" style="left:1140.5px;top:528px">Auto Scroll</div>
<div class="abs" style="left:1140px;top:547.5px;width:40px;height:19.5px;border-radius:10px;background:#ececec;border:1px solid #dedede"></div><div class="abs" style="left:1139.5px;top:547px;width:20.5px;height:20.5px;border-radius:50%;background:#fff;box-shadow:0 1px 2px rgba(0,0,0,0.35)"></div>
<div class="abs" style="left:1139px;top:597px;width:24px;height:1px;background:#d0d0d0"></div><div class="abs" style="left:1250px;top:597px;width:97px;height:1px;background:#d0d0d0"></div>
<div class="abs" style="left:1169.5px;top:591px;font-size:9.6px;color:#444;white-space:nowrap;letter-spacing:-0.1px">LAST HOUR/DAY</div>
<div class="abs" style="left:1140.5px;top:625px;width:11.5px;height:11.5px;border:1px solid #bbb;border-radius:2px;background:#fff"></div>
<div class="abs" style="left:1163px;top:617.5px;width:91px;height:25px;border:1px solid #ebebeb;border-radius:4px;background:#ebebeb"></div><div class="abs sval" style="left:1172.5px;top:623.5px;color:#aaa">1</div><div class="abs" style="left:1231px;top:617.5px;width:23px;height:25px;background:#3494d8;border-radius:0 4px 4px 0"></div><svg class="abs" style="left:1238.5px;top:627.5px;opacity:0.55" width="8" height="5" viewBox="0 0 8 5"><path d="M0.5 0.5 L7.5 0.5 L4 4.5Z" fill="#fff"/></svg>
<div class="abs" style="left:1256px;top:617.5px;width:89.5px;height:25px;border:1px solid #ebebeb;border-radius:4px;background:#ebebeb"></div><div class="abs sval" style="left:1265.5px;top:623.5px;color:#aaa">Hour</div><div class="abs" style="left:1322.5px;top:617.5px;width:23px;height:25px;background:#3494d8;border-radius:0 4px 4px 0"></div><svg class="abs" style="left:1330.0px;top:627.5px;opacity:0.55" width="8" height="5" viewBox="0 0 8 5"><path d="M0.5 0.5 L7.5 0.5 L4 4.5Z" fill="#fff"/></svg>
<div class="abs" style="left:1125px;top:651px;width:234px;height:1px;background:#ddd"></div>
</body></html>
